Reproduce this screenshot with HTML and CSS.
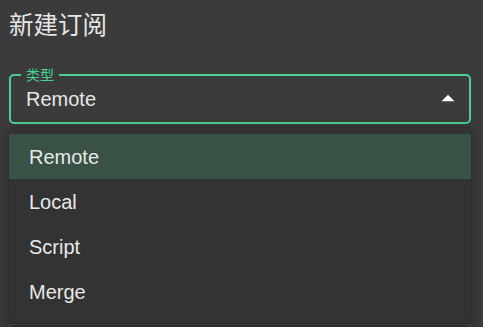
FILE: index.html
```html
<!DOCTYPE html>
<html lang="zh">
<head>
<meta charset="utf-8">
<title>新建订阅</title>
<link rel="stylesheet" href="styles.css">
</head>
<body>
<div class="dialog">
  <h2 class="title">新建订阅</h2>
  <div class="field focused">
    <span class="label">类型</span>
    <span class="value">Remote</span>
    <svg class="arrow" width="14" height="8" viewBox="0 0 14 8"><path d="M0.5 7.2 L7 0.7 L13.5 7.2 Z" fill="#ffffff"/></svg>
  </div>
  <div class="field ghost"></div>
</div>
<ul class="menu">
  <li class="item selected">Remote</li>
  <li class="item">Local</li>
  <li class="item">Script</li>
  <li class="item">Merge</li>
</ul>
</body>
</html>
```
FILE: styles.css
```css
html, body {
  margin: 0;
  padding: 0;
  background: #3b3b3b;
  overflow: hidden;
  height: 327px;
}
body {
  font-family: "Liberation Sans", Arial, "Noto Sans CJK SC", sans-serif;
  color: #e6e6e6;
}
.dialog {
  padding: 4px 12px 0 9px;
}
.title {
  margin: 0;
  font-family: "Noto Sans CJK SC", sans-serif;
  font-weight: 400;
  font-size: 24.5px;
  line-height: 40px;
  color: #e6e6e6;
}
.field {
  box-sizing: border-box;
  position: relative;
  height: 50px;
  margin-top: 30px;
  border: 2px solid #4ccf93;
  border-radius: 5px;
  display: flex;
  align-items: center;
  padding: 0 0 0 15px;
}
.label {
  position: absolute;
  top: -10px;
  left: 10px;
  padding: 0 5px;
  background: #3b3b3b;
  font-family: "Noto Sans CJK SC", sans-serif;
  font-size: 14px;
  line-height: 16px;
  color: #4ccf93;
}
.value {
  font-size: 20px;
  line-height: 24px;
  color: #e6e6e6;
  flex: 1;
}
.arrow {
  margin-right: 14px;
  margin-top: -2px;
}
.field.ghost {
  margin-top: 200px;
  height: 3px;
  border: 1px solid #5a5a5a;
  border-bottom: none;
  border-radius: 4px 4px 0 0;
}
.menu {
  position: absolute;
  top: 126px;
  left: 9px;
  width: 462px;
  margin: 0;
  padding: 8px 0 9px;
  list-style: none;
  background: #333333;
  box-shadow: 0 5px 6px -3px rgba(0,0,0,0.2), 0 8px 10px 1px rgba(0,0,0,0.14), 0 3px 14px 2px rgba(0,0,0,0.12);
  border-radius: 4px 4px 0 0;
}
.item {
  height: 45px;
  line-height: 46px;
  padding-left: 20px;
  font-size: 20px;
  color: #e8e8e8;
}
.item.selected {
  background: #3a5145;
}
```
